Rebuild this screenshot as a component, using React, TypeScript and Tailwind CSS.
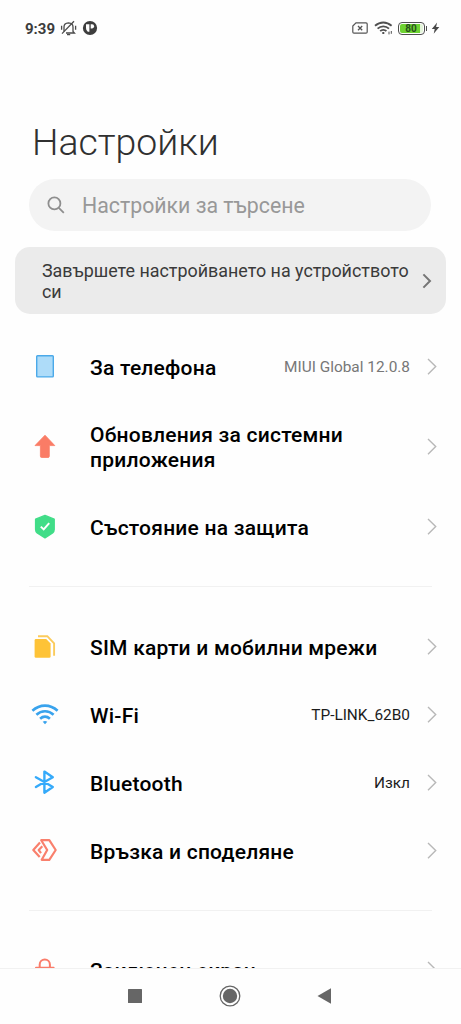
import type { ReactNode } from "react";

type Item = {
  label: string;
  icon: ReactNode;
  value?: string;
  valueClass?: string;
  tall?: boolean;
};

function Icon({ children }: { children: ReactNode }) {
  return (
    <svg viewBox="0 0 30 30" className="w-[30px] h-[30px] shrink-0" fill="none">
      {children}
    </svg>
  );
}

function Chevron() {
  return (
    <svg viewBox="0 0 10 18" className="w-[10px] h-[18px] shrink-0" fill="none">
      <path d="M1 1 8.7 8.6 1 16.2" stroke="#b8b8b8" strokeWidth="1.4" />
    </svg>
  );
}

const PhoneIcon = (
  <Icon>
    <rect x="6.7" y="3.7" width="16.6" height="21.2" rx="0.8" fill="#aedcf9" stroke="#4ba9e9" strokeWidth="1.4" />
  </Icon>
);

const UpdateIcon = (
  <Icon>
    <path
      d="M15 3.2 24.8 13.6H19.3V24.2Q19.3 25.5 18 25.5H11.7Q10.4 25.5 10.4 24.2V13.6H5Z"
      fill="#fa7c66"
      stroke="#fa7c66"
      strokeWidth="0.8"
      strokeLinejoin="round"
    />
  </Icon>
);

const ShieldIcon = (
  <Icon>
    <path
      d="M15 3.4 24.2 7.2V17.6Q24.2 19.6 22.6 20.9L15 25.8 7.2 20.9Q5.6 19.6 5.6 17.6V7.2Z"
      fill="#41dd88"
      stroke="#41dd88"
      strokeWidth="1.4"
      strokeLinejoin="round"
    />
    <path d="M10.8 14.6 13.7 17.4 19.2 11.2" stroke="#fff" strokeWidth="2" />
  </Icon>
);

const SimIcon = (
  <Icon>
    <path d="M6 7H16.2L20.6 11.6V24.4Q20.6 25.8 19.2 25.8H6Q4.6 25.8 4.6 24.4V8.4Q4.6 7 6 7Z" fill="#fec337" />
    <path d="M8 4.2H17.3L24.1 11.4V23.8" stroke="#fbcb5c" strokeWidth="1.9" />
  </Icon>
);

const WifiIcon = (
  <Icon>
    <g stroke="#39a3ed" strokeWidth="2.6">
      <path d="M2.4 10.8Q8 5.6 15 5.6T27.6 10.8" />
      <path d="M6.4 14.8Q10.2 11.2 15 11.2T23.6 14.8" />
      <path d="M10.1 18.7Q12.4 16.6 15 16.6T19.9 18.7" />
    </g>
    <path d="M12.7 21.8Q15 20.2 17.3 21.8L15 24.2Z" fill="#39a3ed" />
  </Icon>
);

const BluetoothIcon = (
  <Icon>
    <path
      d="M5.9 9.2 14.4 14 22.8 19 14.4 24.7V3.6L22.8 9.2 14.4 14 5.9 19"
      stroke="#35aafa"
      strokeWidth="2.4"
      strokeLinejoin="round"
      strokeLinecap="round"
    />
  </Icon>
);

const ShareIcon = (
  <Icon>
    <g stroke="#f9806d" strokeWidth="2.2" strokeLinejoin="round">
      <path d="M11.2 4.2H19.3L25.7 14 19.3 23.8H11.7L17.2 14Z" />
      <path d="M10 6.6 3.3 14 9.7 21" />
      <path d="M12.3 10.3 8.7 14 11 17.2" />
    </g>
  </Icon>
);

const LockIcon = (
  <Icon>
    <path d="M9.7 13V9.5A5.1 5.1 0 0 1 19.9 9.5V13" stroke="#fa7c6a" strokeWidth="2" />
    <rect x="5" y="11.8" width="19.6" height="15" rx="1" fill="#fa7c6a" />
  </Icon>
);

const deviceItems: Item[] = [
  { label: "За телефона", icon: PhoneIcon, value: "MIUI Global 12.0.8", valueClass: "text-[#777]" },
  { label: "Обновления за системни приложения", icon: UpdateIcon, tall: true },
  { label: "Състояние на защита", icon: ShieldIcon },
];

const networkItems: Item[] = [
  { label: "SIM карти и мобилни мрежи", icon: SimIcon },
  { label: "Wi-Fi", icon: WifiIcon, value: "TP-LINK_62B0" },
  { label: "Bluetooth", icon: BluetoothIcon, value: "Изкл" },
  { label: "Връзка и споделяне", icon: ShareIcon },
];

const displayItems: Item[] = [{ label: "Заключен екран", icon: LockIcon }];

function Row({ item }: { item: Item }) {
  return (
    <li className={`flex items-center pl-[30px] pr-6 ${item.tall ? "h-[92px]" : "h-[68px]"}`}>
      {item.icon}
      <span
        className={`ml-[30px] flex-1 text-[21px] leading-[25px] tracking-[0.23px] font-medium text-black ${
          item.tall ? "pt-px" : "pt-[2px]"
        }`}
      >
        {item.label}
      </span>
      {item.value && (
        <span className={`text-[15.4px] pt-[2px] whitespace-nowrap mr-[17px] ${item.valueClass ?? "text-[#1c1c1c]"}`}>
          {item.value}
        </span>
      )}
      <Chevron />
    </li>
  );
}

function Divider() {
  return <div className="h-px mx-[29px] mt-[25px] mb-[26px] bg-[#f1f1f1]" />;
}

function StatusBar() {
  return (
    <header className="h-14 flex items-center justify-between pl-[25px] pr-[21px] shrink-0">
      <div className="flex items-center">
        <span className="text-[15px] leading-none font-bold text-[#3c3c3c] pt-[2px]">9:39</span>
        <svg viewBox="0 0 17 16" className="w-[17px] h-4 ml-[5px]" fill="none" stroke="#4a4a4a" strokeWidth="1.3">
          <path d="M4 11.5V7Q4 3 8.5 2.8 13 3 13 7V11.5L14.4 13H6" />
          <path d="M7 14.6H10.2" />
          <path d="M1.6 5.8V9.8M15.6 5.8V9.8" />
          <path d="M14 1.2 2 13.6" />
        </svg>
        <svg viewBox="0 0 16 16" className="w-4 h-4 ml-[5px]">
          <circle cx="8" cy="8" r="7.1" fill="#3d3d3d" />
          <path d="M4 4.2H7.4V11.8H5.8Q4 10.5 4 8Z" fill="#fff" />
          <path d="M8.7 4.2H10.2Q12.1 4.4 12.1 6.3T10.2 8.4H8.7Z" fill="#fff" />
        </svg>
      </div>
      <div className="flex items-center">
        <svg viewBox="0 0 16 12" className="w-4 h-3" fill="none" stroke="#555">
          <path d="M4 .8H14Q15.2.8 15.2 2V10Q15.2 11.2 14 11.2H2Q.8 11.2.8 10V4Z" strokeWidth="1.2" />
          <path d="M6 4 10.2 8.2M10.2 4 6 8.2" strokeWidth="1.3" />
        </svg>
        <svg viewBox="0 0 19 14" className="w-[19px] h-[14px] ml-[6px]" fill="none" stroke="#505050" strokeWidth="1.8">
          <path d="M1 4.8Q4.8 1.5 9.3 1.5T17.6 4.8" />
          <path d="M3.6 7.6Q6 5.3 9.3 5.3T15 7.6" />
          <path d="M6.2 10.2Q7.4 8.9 9.3 8.9T12.4 10.2" />
          <path d="M9.3 11V13" strokeWidth="2" />
          <path d="M15 13.4V10.6M17.3 10V12.8" strokeWidth="1" />
        </svg>
        <div className="ml-[5px] w-[27px] h-[13px] rounded-[4px] border-[1.5px] border-[#4f4f4f] p-px">
          <div className="flex items-center justify-center w-full h-full rounded-[2px] bg-linear-to-r from-[#6ed332] from-85% to-[#e4f5da] to-85%">
            <span className="text-[10px] leading-[10px] pt-px font-bold text-[#26501a]">80</span>
          </div>
        </div>
        <div className="w-[1.5px] h-[5px] ml-px bg-[#4f4f4f]" />
        <svg viewBox="0 0 8 12" className="w-[9px] h-3 ml-1">
          <path d="M5.6.4.3 6.9H3.2L2.2 11.8 7.8 5H4.6Z" fill="#484848" />
        </svg>
      </div>
    </header>
  );
}

export default function App() {
  return (
    <div className="w-[461px] h-[1024px] flex flex-col overflow-hidden bg-[#fefefe] font-[Roboto,'Noto_Sans',sans-serif]">
      <StatusBar />

      <main className="flex-1 min-h-0 overflow-hidden">
        <h1 className="mt-[62px] ml-8 text-[37.4px] leading-[48px] font-light text-[#303030]">Настройки</h1>

        {/* Search */}
        <div className="mt-[13px] ml-[29px] mr-[30px] h-[52px] rounded-full bg-[#f3f3f3] flex items-center pl-[18px]">
          <svg viewBox="0 0 18 18" className="w-[18px] h-[18px]" fill="none" stroke="#8e8e8e" strokeWidth="1.8">
            <circle cx="7.4" cy="7.4" r="6" />
            <path d="M11.8 11.8 16.8 16.8" />
          </svg>
          <span className="ml-[17px] pt-px text-[21.3px] text-[#989898]">Настройки за търсене</span>
        </div>

        {/* Setup reminder */}
        <div className="mt-4 mx-[15px] h-[67px] rounded-[15px] bg-[#ebebeb] flex items-center pl-[27px] pr-[14px]">
          <p className="flex-1 pt-px text-[17.9px] leading-[21px] text-[#3a3a3a]">
            Завършете настройването на устройството си
          </p>
          <svg viewBox="0 0 10 16" className="w-[10px] h-4 shrink-0" fill="none">
            <path d="M1.4 1.4 8 8 1.4 14.6" stroke="#757575" strokeWidth="2" />
          </svg>
        </div>

        <ul className="mt-[19px]">
          {deviceItems.map((item) => (
            <Row key={item.label} item={item} />
          ))}
        </ul>
        <Divider />
        <ul>
          {networkItems.map((item) => (
            <Row key={item.label} item={item} />
          ))}
        </ul>
        <Divider />
        <ul className="-mt-px">
          {displayItems.map((item) => (
            <Row key={item.label} item={item} />
          ))}
        </ul>
      </main>

      {/* System navigation */}
      <nav className="h-14 shrink-0 border-t border-[#f1f1f1] bg-[#fefefe] flex items-center pl-[128px] pb-px">
        <svg viewBox="0 0 14 14" className="w-[14px] h-[14px]">
          <rect width="14" height="14" rx="0.5" fill="#666" />
        </svg>
        <svg viewBox="0 0 22 22" className="w-[22px] h-[22px] ml-[77px]">
          <circle cx="11" cy="11" r="9.8" fill="none" stroke="#666" strokeWidth="1.3" />
          <circle cx="11" cy="11" r="7.2" fill="#666" />
        </svg>
        <svg viewBox="0 0 14 16" className="w-[14px] h-4 ml-[76px]">
          <path d="M.5 8 14 .3V15.7Z" fill="#666" />
        </svg>
      </nav>
    </div>
  );
}
